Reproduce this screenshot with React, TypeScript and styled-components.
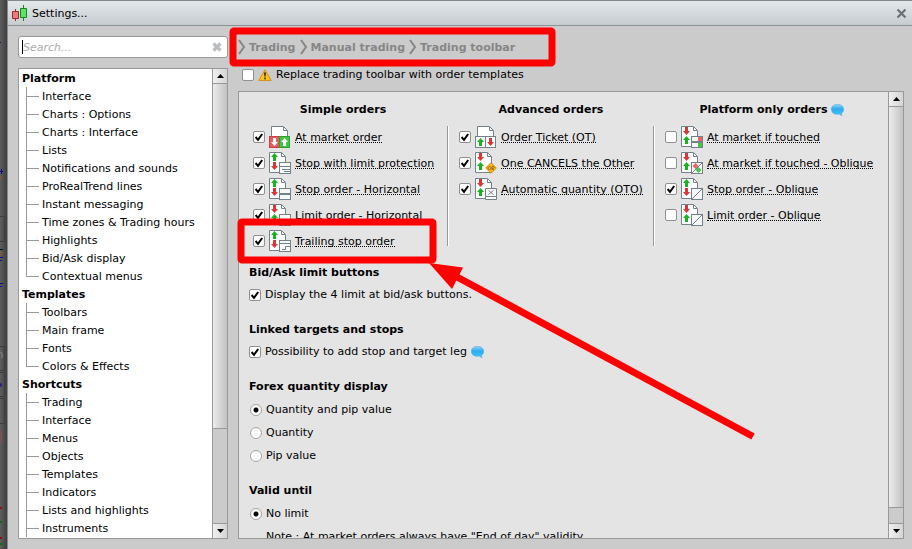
import React from 'react';
import styled, { createGlobalStyle, css } from 'styled-components';

const line = '#999999';

const GlobalStyle = createGlobalStyle`
  * { box-sizing: border-box; }
  html, body, #root { height: 100%; }
  body {
    margin: 0;
    overflow: hidden;
    background: #505050;
    color: #000;
    font: 11px/18px "DejaVu Sans", "Liberation Sans", sans-serif;
  }
  button, input { font: inherit; color: inherit; margin: 0; }
  h2, h3, ul, ol, p { margin: 0; padding: 0; font-size: 11px; }
  ul, ol { list-style: none; }
`;

const Screen = styled.div`
  position: relative;
  display: flex;
  height: 100vh;
`;

const Edge = styled.div`
  flex: 0 0 7px;
  overflow: hidden;
  background: linear-gradient(90deg, #5e5e5e, #3e3e3e);
  svg { display: block; }
`;

const Dialog = styled.div`
  flex: 1;
  min-width: 0;
  display: flex;
  flex-direction: column;
  background: #cbcbcb;
  border-left: 1px solid #85898c;
`;

const TitleBar = styled.header`
  flex: none;
  display: flex;
  align-items: center;
  height: 26px;
  padding: 0 5px 0 4px;
  gap: 4px;
  border-top: 1px solid #85898c;
  border-bottom: 1px solid #8d9295;
  background: linear-gradient(#e3e8eb, #c7ccd0);
`;

const Title = styled.h2`
  flex: 1;
  height: 18px;
  font-weight: normal;
  line-height: 20px;
`;

const IconButton = styled.button`
  display: flex;
  padding: 0;
  border: 0;
  background: none;
`;

const Body = styled.div`
  flex: 1;
  min-height: 0;
  display: grid;
  grid-template-columns: 210px minmax(0, 1fr);
  gap: 10px;
  padding: 10px 8px 10px 10px;
`;

const Sidebar = styled.aside`
  display: flex;
  flex-direction: column;
  gap: 10px;
  min-height: 0;
`;

const SearchBox = styled.label`
  flex: none;
  display: flex;
  align-items: center;
  height: 22px;
  padding: 0 5px 0 3px;
  background: #fff;
  border: 1px solid ${line};
  border-radius: 3px;
`;

const Caret = styled.span`
  width: 1px;
  height: 14px;
  background: #000;
`;

const SearchInput = styled.input`
  flex: 1;
  min-width: 0;
  padding: 2px 0 0;
  border: 0;
  outline: 0;
  background: none;
  font-style: italic;
  &::placeholder { color: #ababab; opacity: 1; }
`;

const Framed = styled.div<{ $tone: string }>`
  flex: 1;
  min-height: 0;
  display: flex;
  border: 1px solid ${line};
  background: ${p => p.$tone};
`;

const Scroller = styled.div`
  flex: 1;
  min-width: 0;
  overflow: hidden;
`;

const TreeHeading = styled.h3`
  height: 18px;
  padding-left: 3px;
  line-height: 20px;
`;

const TreeItem = styled.li<{ $last: boolean }>`
  height: 18px;
  padding-left: 23px;
  background:
    linear-gradient(${line}, ${line}) 7px 0 / 1px ${p => (p.$last ? '10px' : '100%')} no-repeat,
    linear-gradient(${line}, ${line}) 7px 9px / 13px 1px no-repeat;
`;

const TreeButton = styled.button`
  display: block;
  padding: 0;
  border: 0;
  background: none;
  line-height: 20px;
`;

const Bar = styled.div`
  flex: 0 0 15px;
  display: flex;
  flex-direction: column;
  border-left: 1px solid ${line};
  background: #cbcbcb;
`;

const BarButton = styled.button<{ $down?: boolean }>`
  flex: 0 0 15px;
  display: flex;
  align-items: center;
  justify-content: center;
  padding: 0;
  border: 0 solid ${line};
  border-width: ${p => (p.$down ? '1px 0 0' : '0 0 1px')};
  background: linear-gradient(90deg, #f0f0f0, #d4d4d4);
`;

const Thumb = styled.div<{ $share: number }>`
  flex: ${p => p.$share} 0 0;
  border-bottom: 1px solid ${line};
  background: linear-gradient(90deg, #ececec, #c2c2c2);
`;

const Rest = styled.div<{ $share: number }>`
  flex: ${p => p.$share} 0 0;
`;

const Main = styled.main`
  display: flex;
  flex-direction: column;
  min-width: 0;
  min-height: 0;
`;

const Crumbs = styled.ol`
  flex: none;
  display: flex;
  align-items: center;
  gap: 4px;
  height: 22px;
  color: #868686;
  font-weight: bold;
`;

const Crumb = styled.li`
  display: flex;
  align-items: center;
  gap: 3px;
`;

const CrumbLink = styled.a`
  height: 18px;
  color: inherit;
  line-height: 20px;
  text-decoration: none;
`;

const ReplaceRow = styled.label`
  flex: none;
  display: flex;
  align-items: center;
  gap: 4px;
  height: 33px;
  padding-left: 4px;
`;

const tick =
  "url(\"data:image/svg+xml,%3Csvg xmlns='http://www.w3.org/2000/svg' width='10' height='10'%3E%3Cpath d='M1.6 5 L4 7.8 L8.2 2' fill='none' stroke='black' stroke-width='2'/%3E%3C/svg%3E\")";

const Check = styled.input.attrs({ type: 'checkbox' })`
  appearance: none;
  flex: none;
  width: 12px;
  height: 12px;
  background: #fff center no-repeat;
  border: 1px solid #909090;
  border-radius: 2px;
  &:checked { background-image: ${tick}; }
`;

const Radio = styled.input.attrs({ type: 'radio' })`
  appearance: none;
  flex: none;
  width: 12px;
  height: 12px;
  border: 1px solid #a2a2a2;
  border-radius: 50%;
  background: #fff;
  &:checked { background: radial-gradient(circle, #000 0 2px, #fff 3px); }
`;

const Orders = styled.div`
  display: grid;
  grid-template-columns: 208fr 2px 204fr 2px 233fr;
  padding-top: 7px;
`;

const OrdersHeading = styled.h3`
  display: flex;
  align-items: center;
  justify-content: center;
  gap: 3px;
  height: 21px;
  line-height: 19px;
`;

const Separator = styled.div`
  height: 120px;
  margin-top: 27px;
  border-left: 1px solid ${line};
  border-right: 1px solid #fff;
`;

const OrderList = styled.ul<{ $first: boolean }>`
  padding: 4px 0 0 ${p => (p.$first ? '14px' : '10px')};
`;

const OrderRow = styled.li`
  display: flex;
  align-items: center;
  gap: 4px;
  height: 26px;
  svg { flex: none; }
`;

const OrderLabel = styled.label`
  height: 12px;
  line-height: 13px;
  white-space: nowrap;
  border-bottom: 1px dotted #000;
`;

const Sections = styled.div`
  padding-top: 8px;
`;

const Section = styled.fieldset`
  margin: 0 0 13px;
  padding: 0 10px;
  border: 0;
  min-width: 0;
`;

const SectionTitle = styled.legend`
  height: 22px;
  padding: 0;
  font-weight: bold;
  line-height: 22px;
`;

const optionRow = css`
  display: flex;
  align-items: center;
  gap: 4px;
  white-space: nowrap;
`;

const CheckRow = styled.label`
  ${optionRow}
  height: 22px;
`;

const RadioRow = styled.label`
  ${optionRow}
  height: 23px;
  padding-left: 1px;
`;

const Note = styled.p`
  ${optionRow}
  height: 23px;
  padding-left: 17px;
`;

const Annotations = styled.svg`
  position: absolute;
  top: 0;
  left: 0;
  pointer-events: none;
`;

const slate = '#73828a';
const green = '#16b51c';
const red = '#e03434';

function Arrow({ x, y, down, fill }: { x: number; y: number; down?: boolean; fill: string }) {
  const d = down
    ? `M${x + 2} ${y}h3v4h2l-3.5 4l-3.5 -4h2z`
    : `M${x + 2} ${y + 8}h3v-4h2l-3.5 -4l-3.5 4h2z`;
  return <path d={d} fill={fill} />;
}

type Badge = 'lines' | 'bar' | 'step' | 'or' | 'cross' | 'flags' | 'flagsOblique' | 'oblique';

function BadgeArt({ kind }: { kind: Badge }) {
  if (kind === 'or') {
    return (
      <g>
        <path d="M16 10.7L21.3 16L16 21.3L10.7 16Z" fill="#fbb917" stroke="#cf8a10" />
        <circle cx="14.5" cy="16" r="1.5" fill="none" stroke="#9a6200" strokeWidth=".8" />
        <path d="M17 18v-3.600h1q1 .1 1 1t-1 1h-1l2 1.600" fill="none" stroke="#9a6200" strokeWidth=".8" />
      </g>
    );
  }
  if (kind === 'cross') {
    return (
      <g fill="#fff" stroke={slate}>
        <path d="M10.500 17.500h11v4h-11z" />
        <path d="M10.500 10.500h11v8h-11z" />
        <path d="M13.500 12.500l5 4M18.500 12.500l-5 4" />
      </g>
    );
  }
  const slanted = kind === 'oblique' || kind === 'flagsOblique';
  return (
    <g>
      <rect x="10.500" y="10.500" width="11" height="11" fill="#f7f8f8" stroke={slate} />
      {kind === 'lines' && <path d="M11 14.500h10M13 17.500h8M15 19.500h6" stroke={slate} fill="none" />}
      {kind === 'bar' && <path d="M11 15.500h10M11 16.500h10" stroke={slate} fill="none" />}
      {kind === 'step' && <path d="M11 13.500h10M13 19.500h3.500v-3h4.500" stroke={slate} fill="none" />}
      {kind === 'flags' && (
        <g>
          <path d="M17 11h4v4h-4z" fill="#ea6464" />
          <path d="M17 17h4v4h-4z" fill="#43c943" />
          <path d="M11 15.500h10M11 16.500h10" stroke={slate} />
        </g>
      )}
      {kind === 'flagsOblique' && (
        <g>
          <path d="M11.500 14l3 -3l3 3l-3 3z" fill="#ea6464" />
          <path d="M14.500 18l3 -3l3 3l-3 3z" fill="#43c943" />
        </g>
      )}
      {slanted && <path d="M11 21L21 11" stroke={slate} />}
    </g>
  );
}

function PageIcon({ upFirst, badge }: { upFirst: boolean; badge: Badge }) {
  return (
    <svg width="22" height="22" viewBox="0 0 22 22" aria-hidden="true">
      <path d="M.5 .5H12.500L16.500 4.500V20.500H.5Z" fill="#fff" stroke={slate} />
      <path d="M12.500 1v3.500h3.500" fill="none" stroke={slate} />
      <Arrow x={2} y={1} down={!upFirst} fill={upFirst ? green : red} />
      <Arrow x={2} y={10} down={upFirst} fill={upFirst ? red : green} />
      <BadgeArt kind={badge} />
    </svg>
  );
}

function PairIcon({ filled }: { filled: boolean }) {
  return (
    <svg width="22" height="22" viewBox="0 0 22 22" aria-hidden="true">
      <path d="M2.500 11V.5H14.500L18.500 4.500V11" fill="#fff" stroke={slate} />
      <path d="M14.500 1v3.500h3.500" fill="none" stroke={slate} />
      <rect x=".5" y="10.500" width="10" height="11" fill={filled ? '#e55b5f' : '#fff'} stroke={filled ? '#d43f44' : slate} />
      <rect x="10.500" y="10.500" width="10" height="11" fill={filled ? '#3fc445' : '#fff'} stroke={filled ? '#25a52b' : slate} />
      <Arrow x={2} y={12} down={filled} fill={filled ? '#fff' : green} />
      <Arrow x={12} y={12} down={!filled} fill={filled ? '#fff' : red} />
    </svg>
  );
}

function Bubble() {
  return (
    <svg width="13" height="12" viewBox="0 0 13 12" aria-hidden="true">
      <defs>
        <linearGradient id="bubble" x1="0" y1="0" x2="0" y2="1">
          <stop offset="0" stopColor="#8fd8fb" />
          <stop offset=".4" stopColor="#2fa9ee" />
          <stop offset="1" stopColor="#3ccbff" />
        </linearGradient>
      </defs>
      <path
        d="M6.500 .4C10 .4 12.600 2.200 12.600 5.200C12.600 7.400 11.700 8.600 10.400 9.400L10.900 11.700L8.300 10.100C3.500 10.900 .4 8.700 .4 5.200C.4 2.200 3 .4 6.500 .4Z"
        fill="url(#bubble)"
        stroke="#4aa9dd"
        strokeWidth=".6"
      />
    </svg>
  );
}

function Warning() {
  return (
    <svg width="14" height="12" viewBox="0 0 14 12" aria-hidden="true">
      <path d="M7 .8L13.200 11.400H.8Z" fill="#fcc51b" stroke="#d98a16" strokeLinejoin="round" />
      <path d="M6 3.500h2l-.4 4h-1.200zM6.200 8.500h1.600v1.700h-1.600z" fill="#3a2800" />
    </svg>
  );
}

function AppIcon() {
  return (
    <svg width="16" height="16" viewBox="0 0 16 16" aria-hidden="true">
      <path d="M3.500 4v12" stroke="#a02a2a" />
      <path d="M.5 6.500h6v7h-6z" fill="#e87c80" stroke="#a02a2a" />
      <path d="M11.500 0v16" stroke="#128a18" />
      <path d="M8.500 3.500h6v9h-6z" fill="#5de36a" stroke="#128a18" />
    </svg>
  );
}

function EdgeMarks() {
  return (
    <svg width="7" height="549" viewBox="0 0 7 549" aria-hidden="true">
      <g fill="#0b0b8c">
        <path d="M0 42h1v1H0zM0 171h3v1H0zM1 169h1v5H1zM0 257h3v1H0zM0 260h2v1H0zM0 283h3v1H0zM0 286h2v1H0z" />
        <circle cx="0" cy="385" r="2" fill="#22228a" />
      </g>
      <path d="M0 176h1v3H0zM0 252h3v1H0zM0 254h2v1H0z" fill="#8a5a28" />
      <path d="M0 249h3v1H0z" fill="#111" />
      <g fill="none" stroke="#3d3d3d">
        <path d="M0 216.500h4.500v25H0M0 346.500h4.500v24H0M0 372.500h4.500v24H0M0 398.500h4.500v25H0" />
      </g>
      <path d="M0 431.500h1.500v11H0" fill="none" stroke="#8c4a4a" />
      <path d="M0 352q2 0 2 3v3" fill="none" stroke="#8a8a8a" />
      <path d="M0 507h2v2H0zM0 537h2v2H0z" fill="#8a1010" />
      <path d="M0 521h2v2H0zM0 543h2v2H0z" fill="#0d6a12" />
    </svg>
  );
}

function Scrollbar({ share }: { share: number }) {
  return (
    <Bar>
      <BarButton aria-label="Scroll up">
        <svg width="7" height="4" viewBox="0 0 7 4"><path d="M3.500 0L7 4H0z" /></svg>
      </BarButton>
      <Thumb $share={share} />
      <Rest $share={1000 - share} />
      <BarButton $down aria-label="Scroll down">
        <svg width="7" height="4" viewBox="0 0 7 4"><path d="M3.500 4L7 0H0z" /></svg>
      </BarButton>
    </Bar>
  );
}

const tree = [
  {
    title: 'Platform',
    items: [
      'Interface', 'Charts : Options', 'Charts : Interface', 'Lists', 'Notifications and sounds',
      'ProRealTrend lines', 'Instant messaging', 'Time zones & Trading hours', 'Highlights',
      'Bid/Ask display', 'Contextual menus',
    ],
  },
  { title: 'Templates', items: ['Toolbars', 'Main frame', 'Fonts', 'Colors & Effects'] },
  {
    title: 'Shortcuts',
    more: true,
    items: [
      'Trading', 'Interface', 'Menus', 'Objects', 'Templates', 'Indicators',
      'Lists and highlights', 'Instruments',
    ],
  },
];

type Order = { label: string; on: boolean; icon: React.ReactNode };

const orders: { title: string; help?: boolean; rows: Order[] }[] = [
  {
    title: 'Simple orders',
    rows: [
      { label: 'At market order', on: true, icon: <PairIcon filled /> },
      { label: 'Stop with limit protection', on: true, icon: <PageIcon upFirst badge="lines" /> },
      { label: 'Stop order - Horizontal', on: true, icon: <PageIcon upFirst badge="bar" /> },
      { label: 'Limit order - Horizontal', on: true, icon: <PageIcon upFirst={false} badge="bar" /> },
      { label: 'Trailing stop order', on: true, icon: <PageIcon upFirst badge="step" /> },
    ],
  },
  {
    title: 'Advanced orders',
    rows: [
      { label: 'Order Ticket (OT)', on: true, icon: <PairIcon filled={false} /> },
      { label: 'One CANCELS the Other', on: true, icon: <PageIcon upFirst={false} badge="or" /> },
      { label: 'Automatic quantity (OTO)', on: true, icon: <PageIcon upFirst={false} badge="cross" /> },
    ],
  },
  {
    title: 'Platform only orders',
    help: true,
    rows: [
      { label: 'At market if touched', on: false, icon: <PageIcon upFirst={false} badge="flags" /> },
      { label: 'At market if touched - Oblique', on: false, icon: <PageIcon upFirst={false} badge="flagsOblique" /> },
      { label: 'Stop order - Oblique', on: true, icon: <PageIcon upFirst badge="oblique" /> },
      { label: 'Limit order - Oblique', on: false, icon: <PageIcon upFirst={false} badge="oblique" /> },
    ],
  },
];

export default function App() {
  return (
    <Screen>
      <GlobalStyle />
      <Edge><EdgeMarks /></Edge>
      <Dialog>
        <TitleBar>
          <AppIcon />
          <Title>Settings...</Title>
          <IconButton aria-label="Close">
            <svg width="11" height="11" viewBox="0 0 11 11">
              <path d="M1.500 1.500l8 8M9.500 1.500l-8 8" stroke="#6c7174" strokeWidth="2.200" />
            </svg>
          </IconButton>
        </TitleBar>
        <Body>
          <Sidebar>
            <SearchBox>
              <Caret />
              <SearchInput placeholder="Search..." aria-label="Search" />
              <IconButton aria-label="Clear search">
                <svg width="10" height="10" viewBox="0 0 10 10">
                  <path d="M1.500 1.500l7 7M8.500 1.500l-7 7" stroke="#b9bdbf" strokeWidth="3.200" />
                </svg>
              </IconButton>
            </SearchBox>
            <Framed $tone="#fff">
              <Scroller as="nav">
                {tree.map(group => (
                  <React.Fragment key={group.title}>
                    <TreeHeading>{group.title}</TreeHeading>
                    <ul>
                      {group.items.map((item, i) => (
                        <TreeItem key={item} $last={!group.more && i === group.items.length - 1}>
                          <TreeButton>{item}</TreeButton>
                        </TreeItem>
                      ))}
                    </ul>
                  </React.Fragment>
                ))}
              </Scroller>
              <Scrollbar share={785} />
            </Framed>
          </Sidebar>
          <Main>
            <Crumbs>
              {['Trading', 'Manual trading', 'Trading toolbar'].map(name => (
                <Crumb key={name}>
                  <svg width="8" height="16" viewBox="0 0 8 16" aria-hidden="true">
                    <path d="M1 1l5 7l-5 7" fill="none" stroke="#868686" strokeWidth="2" />
                  </svg>
                  <CrumbLink href="#">{name}</CrumbLink>
                </Crumb>
              ))}
            </Crumbs>
            <ReplaceRow>
              <Check />
              <Warning />
              Replace trading toolbar with order templates
            </ReplaceRow>
            <Framed $tone="#e4e4e4">
              <Scroller>
                <Orders>
                  {orders.map((group, g) => (
                    <React.Fragment key={group.title}>
                      {g > 0 && <Separator />}
                      <div>
                        <OrdersHeading>
                          {group.title}
                          {group.help && <Bubble />}
                        </OrdersHeading>
                        <OrderList $first={g === 0}>
                          {group.rows.map((row, r) => (
                            <OrderRow key={row.label}>
                              <Check id={`order-${g}-${r}`} defaultChecked={row.on} />
                              {row.icon}
                              <OrderLabel htmlFor={`order-${g}-${r}`}>{row.label}</OrderLabel>
                            </OrderRow>
                          ))}
                        </OrderList>
                      </div>
                    </React.Fragment>
                  ))}
                </Orders>
                <Sections>
                  <Section>
                    <SectionTitle>Bid/Ask limit buttons</SectionTitle>
                    <CheckRow><Check defaultChecked />Display the 4 limit at bid/ask buttons.</CheckRow>
                  </Section>
                  <Section>
                    <SectionTitle>Linked targets and stops</SectionTitle>
                    <CheckRow><Check defaultChecked />Possibility to add stop and target leg <Bubble /></CheckRow>
                  </Section>
                  <Section>
                    <SectionTitle>Forex quantity display</SectionTitle>
                    <RadioRow><Radio name="forex" defaultChecked />Quantity and pip value</RadioRow>
                    <RadioRow><Radio name="forex" />Quantity</RadioRow>
                    <RadioRow><Radio name="forex" />Pip value</RadioRow>
                  </Section>
                  <Section>
                    <SectionTitle>Valid until</SectionTitle>
                    <RadioRow><Radio name="valid" defaultChecked />No limit</RadioRow>
                    <Note>Note : At market orders always have "End of day" validity.</Note>
                  </Section>
                </Sections>
              </Scroller>
              <Scrollbar share={964} />
            </Framed>
          </Main>
        </Body>
      </Dialog>
      <Annotations width="912" height="549" viewBox="0 0 912 549" aria-hidden="true">
        <g fill="none" stroke="#f00" strokeWidth="7" strokeLinejoin="round">
          <rect x="233" y="31" width="319" height="32" rx="1" />
          <rect x="241" y="222" width="192" height="38" rx="1" />
          <path d="M457 277L753 436.500" />
        </g>
        <path d="M429 263L463 267.500L452 289Z" fill="#f00" />
      </Annotations>
    </Screen>
  );
}
